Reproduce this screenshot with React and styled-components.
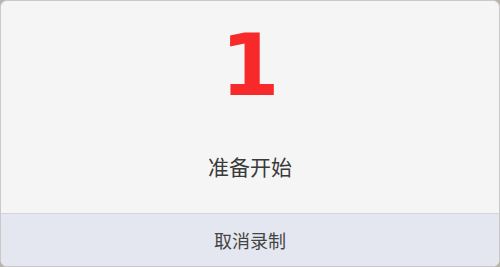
import React from "react";
import styled, {createGlobalStyle} from 'styled-components';

const GlobalStyle = createGlobalStyle`
  html, body {
    margin: 0;
    padding: 0;
    background: #b9b4ac;
  }
  #root {
    width: 500px;
    height: 267px;
  }
`;

const Dialog = styled.div`
  box-sizing: border-box;
  width: 500px;
  height: 267px;
  display: flex;
  flex-direction: column;
  border: 1px solid #c9c9c9;
  border-radius: 7px;
  overflow: hidden;
  background: #f5f5f5;
  font-family: "Noto Sans CJK SC", "Noto Sans", sans-serif;
`;

const Body = styled.div`
  flex: 1;
  display: flex;
  flex-direction: column;
  align-items: center;
  padding-top: 15px;
`;

const Count = styled.div`
  font-family: "DejaVu Sans", sans-serif;
  font-weight: bold;
  font-size: 85px;
  line-height: 100px;
  color: #f7292a;
`;

const Status = styled.div`
  margin-top: 35px;
  font-size: 21px;
  line-height: 30px;
  color: #3a3a3a;
`;

const Footer = styled.button`
  height: 53px;
  flex: none;
  border: none;
  border-top: 1px solid #d2d5dc;
  background: #e4e7ef;
  font-family: inherit;
  font-size: 18px;
  color: #444;
  cursor: pointer;
  padding: 0;
`;

const App = () => {
    return (
        <>
            <GlobalStyle/>
            <Dialog>
                <Body>
                    <Count>1</Count>
                    <Status>准备开始</Status>
                </Body>
                <Footer>取消录制</Footer>
            </Dialog>
        </>
    );
};

export default App;
